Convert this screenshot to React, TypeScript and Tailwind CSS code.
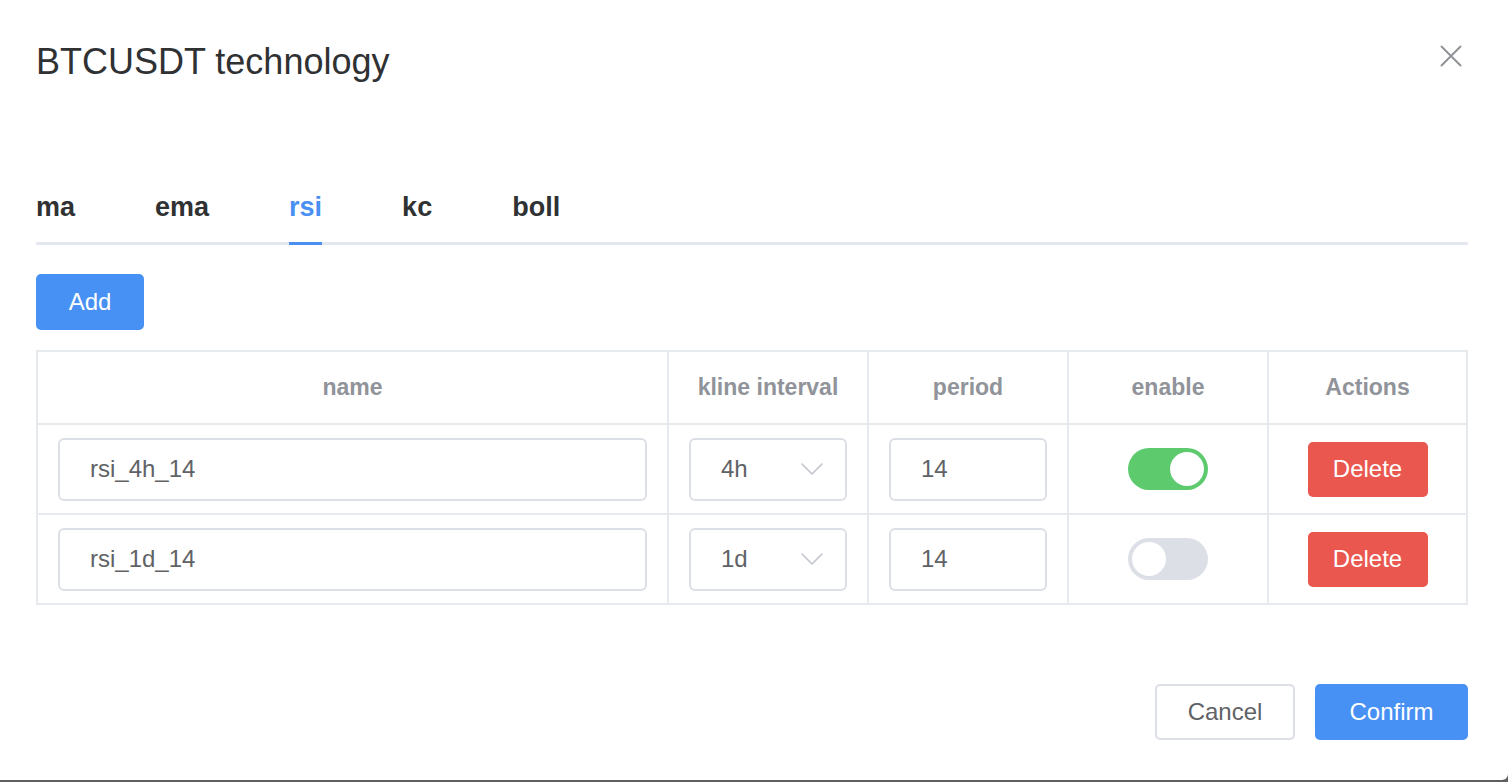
import { useState } from "react";

type Row = { id: number; name: string; interval: string; period: string; enabled: boolean };

const tabs = ["ma", "ema", "rsi", "kc", "boll"];

const initialRows: Row[] = [
  { id: 1, name: "rsi_4h_14", interval: "4h", period: "14", enabled: true },
  { id: 2, name: "rsi_1d_14", interval: "1d", period: "14", enabled: false },
];

function CloseIcon() {
  return (
    <svg width="22" height="22" viewBox="0 0 22 22" fill="none" stroke="#909399" strokeWidth="2" strokeLinecap="round">
      <path d="M1.5 1.5 L20.5 20.5 M20.5 1.5 L1.5 20.5" />
    </svg>
  );
}

function Chevron() {
  return (
    <svg width="22" height="12" viewBox="0 0 22 12" fill="none" stroke="#c0c4cc" strokeWidth="1.6" strokeLinecap="round" strokeLinejoin="round">
      <path d="M1 1 L11 11 L21 1" />
    </svg>
  );
}

function Switch({ on, onToggle }: { on: boolean; onToggle: () => void }) {
  return (
    <button
      onClick={onToggle}
      className={`flex h-[42px] w-[80px] items-center rounded-full p-[4px] ${on ? "justify-end bg-[#5cca6d]" : "justify-start bg-[#dcdfe6]"}`}
    >
      <span className="h-[34px] w-[34px] rounded-full bg-white" />
    </button>
  );
}

export default function App() {
  const [active, setActive] = useState("rsi");
  const [rows, setRows] = useState<Row[]>(initialRows);

  const toggle = (id: number) =>
    setRows((rs) => rs.map((r) => (r.id === id ? { ...r, enabled: !r.enabled } : r)));

  return (
    <div className="flex h-[782px] w-full flex-col bg-[#5f5f5f] font-['Liberation_Sans',Arial,sans-serif]">
      <div className="flex flex-1 flex-col rounded-br-[6px] bg-white pl-[36px] pr-[40px]">
        {/* Header */}
        <div className="flex items-start justify-between pt-[44px]">
          <h1 className="text-[36px] leading-[36px] text-[#303133]">BTCUSDT technology</h1>
          <button className="mr-[6px] mt-[1px]" aria-label="close">
            <CloseIcon />
          </button>
        </div>

        {/* Tabs */}
        <div className="mt-[114px] flex border-b-[3px] border-[#e4e7ed]">
          {tabs.map((t) => (
            <button
              key={t}
              onClick={() => setActive(t)}
              className={`relative mr-[80px] pb-[21px] text-[27px] font-bold leading-[27px] ${active === t ? "text-[#4a90f2]" : "text-[#303133]"}`}
            >
              {t}
              {active === t && <span className="absolute -bottom-[3px] left-0 right-0 h-[3px] bg-[#4a90f2]" />}
            </button>
          ))}
        </div>

        {/* Add */}
        <div className="mt-[29px]">
          <button className="h-[56px] w-[108px] rounded-[5px] bg-[#4790f4] text-[24px] text-white">Add</button>
        </div>

        {/* Table */}
        <table className="mt-[20px] w-full table-fixed border-collapse border-2 border-[#e6e9ee]">
          <colgroup>
            <col className="w-[631px]" />
            <col className="w-[200px]" />
            <col className="w-[200px]" />
            <col className="w-[200px]" />
            <col />
          </colgroup>
          <thead>
            <tr className="h-[73px]">
              {["name", "kline interval", "period", "enable", "Actions"].map((h) => (
                <th key={h} className="border-2 border-[#e6e9ee] text-center text-[23px] font-bold text-[#909399]">
                  {h}
                </th>
              ))}
            </tr>
          </thead>
          <tbody>
            {rows.map((r) => (
              <tr key={r.id} className="h-[90px]">
                <td className="border-2 border-[#e6e9ee] px-[20px]">
                  <div className="flex h-[63px] items-center rounded-[6px] border-2 border-[#dcdfe6] px-[30px] text-[24px] text-[#606266]">
                    {r.name}
                  </div>
                </td>
                <td className="border-2 border-[#e6e9ee] px-[20px]">
                  <div className="flex h-[63px] items-center justify-between rounded-[6px] border-2 border-[#dcdfe6] pl-[30px] pr-[22px] text-[24px] text-[#606266]">
                    <span>{r.interval}</span>
                    <Chevron />
                  </div>
                </td>
                <td className="border-2 border-[#e6e9ee] px-[20px]">
                  <div className="flex h-[63px] items-center rounded-[6px] border-2 border-[#dcdfe6] px-[30px] text-[24px] text-[#606266]">
                    {r.period}
                  </div>
                </td>
                <td className="border-2 border-[#e6e9ee]">
                  <div className="flex justify-center">
                    <Switch on={r.enabled} onToggle={() => toggle(r.id)} />
                  </div>
                </td>
                <td className="border-2 border-[#e6e9ee]">
                  <div className="flex justify-center">
                    <button className="h-[55px] w-[120px] rounded-[5px] bg-[#e9574f] text-[24px] text-white">Delete</button>
                  </div>
                </td>
              </tr>
            ))}
          </tbody>
        </table>

        {/* Footer */}
        <div className="mt-[79px] flex justify-end gap-[20px]">
          <button className="h-[56px] w-[140px] rounded-[5px] border-2 border-[#dcdfe6] bg-white text-[24px] text-[#606266]">Cancel</button>
          <button className="h-[56px] w-[153px] rounded-[5px] bg-[#4790f4] text-[24px] text-white">Confirm</button>
        </div>
      </div>
      <div className="h-[2px]" />
    </div>
  );
}
